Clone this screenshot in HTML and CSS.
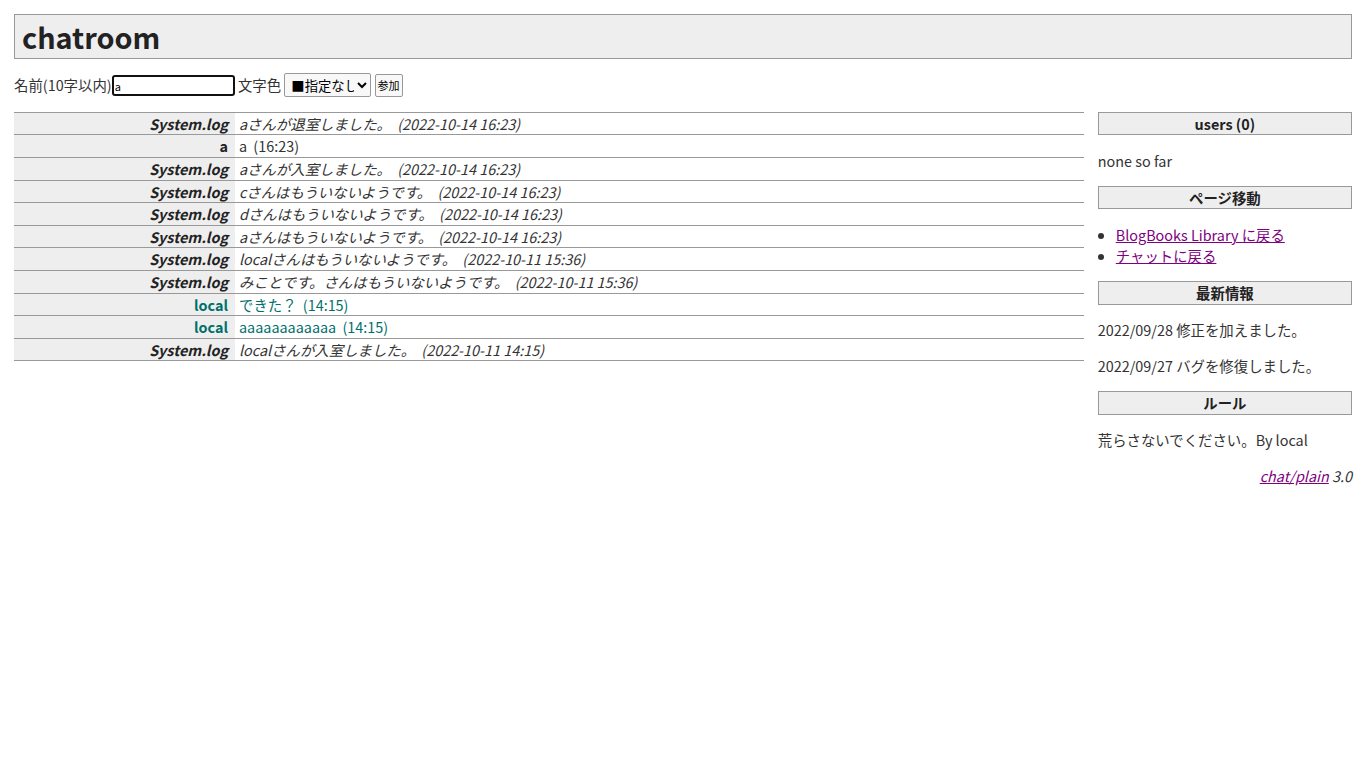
FILE: index.html
```html
<!DOCTYPE html>
<html lang="ja">
<head>
  <meta charset="UTF-8">
  <meta name="viewport" content="width=device-width, initial-scale=1.0">
  <title>chatroom</title>
  <link rel="stylesheet" href="styles.css">
</head>
<body>
  <h1 class="title">chatroom</h1>

  <form class="join-form">
    <label for="name">名前(10字以内)</label><input type="text" id="name" class="name-input" value="a" maxlength="10"> <label for="color">文字色</label>
    <select id="color" class="color-select">
      <option>■指定なし</option>
    </select>
    <button type="button" class="join-button">参加</button>
  </form>

  <div class="layout">
    <div class="main">
      <table class="log">
        <tr class="system"><th>System.log</th><td>aさんが退室しました。 <span class="time">(2022-10-14 16:23)</span></td></tr>
        <tr><th>a</th><td>a <span class="time">(16:23)</span></td></tr>
        <tr class="system"><th>System.log</th><td>aさんが入室しました。 <span class="time">(2022-10-14 16:23)</span></td></tr>
        <tr class="system"><th>System.log</th><td>cさんはもういないようです。 <span class="time">(2022-10-14 16:23)</span></td></tr>
        <tr class="system"><th>System.log</th><td>dさんはもういないようです。 <span class="time">(2022-10-14 16:23)</span></td></tr>
        <tr class="system"><th>System.log</th><td>aさんはもういないようです。 <span class="time">(2022-10-14 16:23)</span></td></tr>
        <tr class="system"><th>System.log</th><td>localさんはもういないようです。 <span class="time">(2022-10-11 15:36)</span></td></tr>
        <tr class="system"><th>System.log</th><td>みことです。さんはもういないようです。 <span class="time">(2022-10-11 15:36)</span></td></tr>
        <tr class="teal"><th>local</th><td>できた？ <span class="time">(14:15)</span></td></tr>
        <tr class="teal"><th>local</th><td>aaaaaaaaaaaa <span class="time">(14:15)</span></td></tr>
        <tr class="system"><th>System.log</th><td>localさんが入室しました。 <span class="time">(2022-10-11 14:15)</span></td></tr>
      </table>
    </div>

    <div class="side">
      <h2>users (0)</h2>
      <p>none so far</p>

      <h2>ページ移動</h2>
      <ul>
        <li><a href="#">BlogBooks Library に戻る</a></li>
        <li><a href="#">チャットに戻る</a></li>
      </ul>

      <h2>最新情報</h2>
      <p>2022/09/28 修正を加えました。</p>
      <p>2022/09/27 バグを修復しました。</p>

      <h2>ルール</h2>
      <p>荒らさないでください。By local</p>

      <p class="version"><a href="#">chat/plain</a> 3.0</p>
    </div>
  </div>
</body>
</html>
```

FILE: styles.css
```css
/* General Styles */
body {
  font-family: "Noto Sans CJK JP", "Noto Sans", sans-serif;
  font-size: 14.4px;
  line-height: 1.5;
  color: #333;
  margin: 0;
  padding: 14px;
}

a {
  color: #800080;
}

/* Header */
.title {
  margin: 0;
  padding: 0 7px;
  font-size: 28.8px;
  line-height: 43px;
  color: #222;
  background: #eee;
  border: 1px solid #999;
}

/* Join form */
.join-form {
  margin: 14.4px 0;
  height: 24px;
  line-height: 24px;
}

.name-input {
  box-sizing: border-box;
  width: 123px;
  height: 21px;
  margin: 2px 0 0;
  padding: 0 1px;
  font-size: 11px;
  font-family: "Noto Sans CJK JP", sans-serif;
  color: #000;
  border: 2px solid #111;
  border-radius: 3px;
  outline: none;
  vertical-align: top;
}

.color-select {
  box-sizing: border-box;
  width: 87px;
  height: 24px;
  margin: 0;
  padding: 0 0 0 2px;
  font-size: 13.33px;
  font-family: "Noto Sans CJK JP", sans-serif;
  color: #000;
  border: 1px solid #999;
  border-radius: 2px;
  background: #f8f8f8;
  vertical-align: top;
}

.join-button {
  box-sizing: border-box;
  height: 23px;
  margin: 1px 0 0;
  padding: 0 2px;
  font-size: 11px;
  line-height: 21px;
  font-family: "Noto Sans CJK JP", sans-serif;
  color: #000;
  background: #f8f8f8;
  border: 1px solid #999;
  border-radius: 2px;
  vertical-align: top;
}

/* Columns */
.layout {
  display: flex;
  justify-content: space-between;
  align-items: flex-start;
}

.main {
  width: 80%;
}

.side {
  width: 19%;
}

/* Chat log */
.log {
  width: 100%;
  border-collapse: collapse;
  border-bottom: 1px solid #999;
}

.log th,
.log td {
  padding: 0;
  border-top: 1px solid #999;
  white-space: nowrap;
}

.log th {
  width: 214px;
  padding-right: 7px;
  text-align: right;
  background: #eee;
  color: #222;
}

.log td {
  padding-left: 4px;
}

.log .time {
  margin-left: 3px;
}

.log .system th,
.log .system td {
  font-style: italic;
}

.log .teal th,
.log .teal td {
  color: #00706b;
}

/* Sidebar */
.side h2 {
  margin: 14.4px 0;
  font-size: 14.4px;
  line-height: 1.5;
  text-align: center;
  color: #222;
  background: #eee;
  border: 1px solid #999;
}

.side h2:first-child {
  margin-top: 0;
}

.side p {
  margin: 14.4px 0;
}

.side ul {
  margin: 14.4px 0;
  padding-left: 18px;
}

.version {
  text-align: right;
  font-style: italic;
}
```
